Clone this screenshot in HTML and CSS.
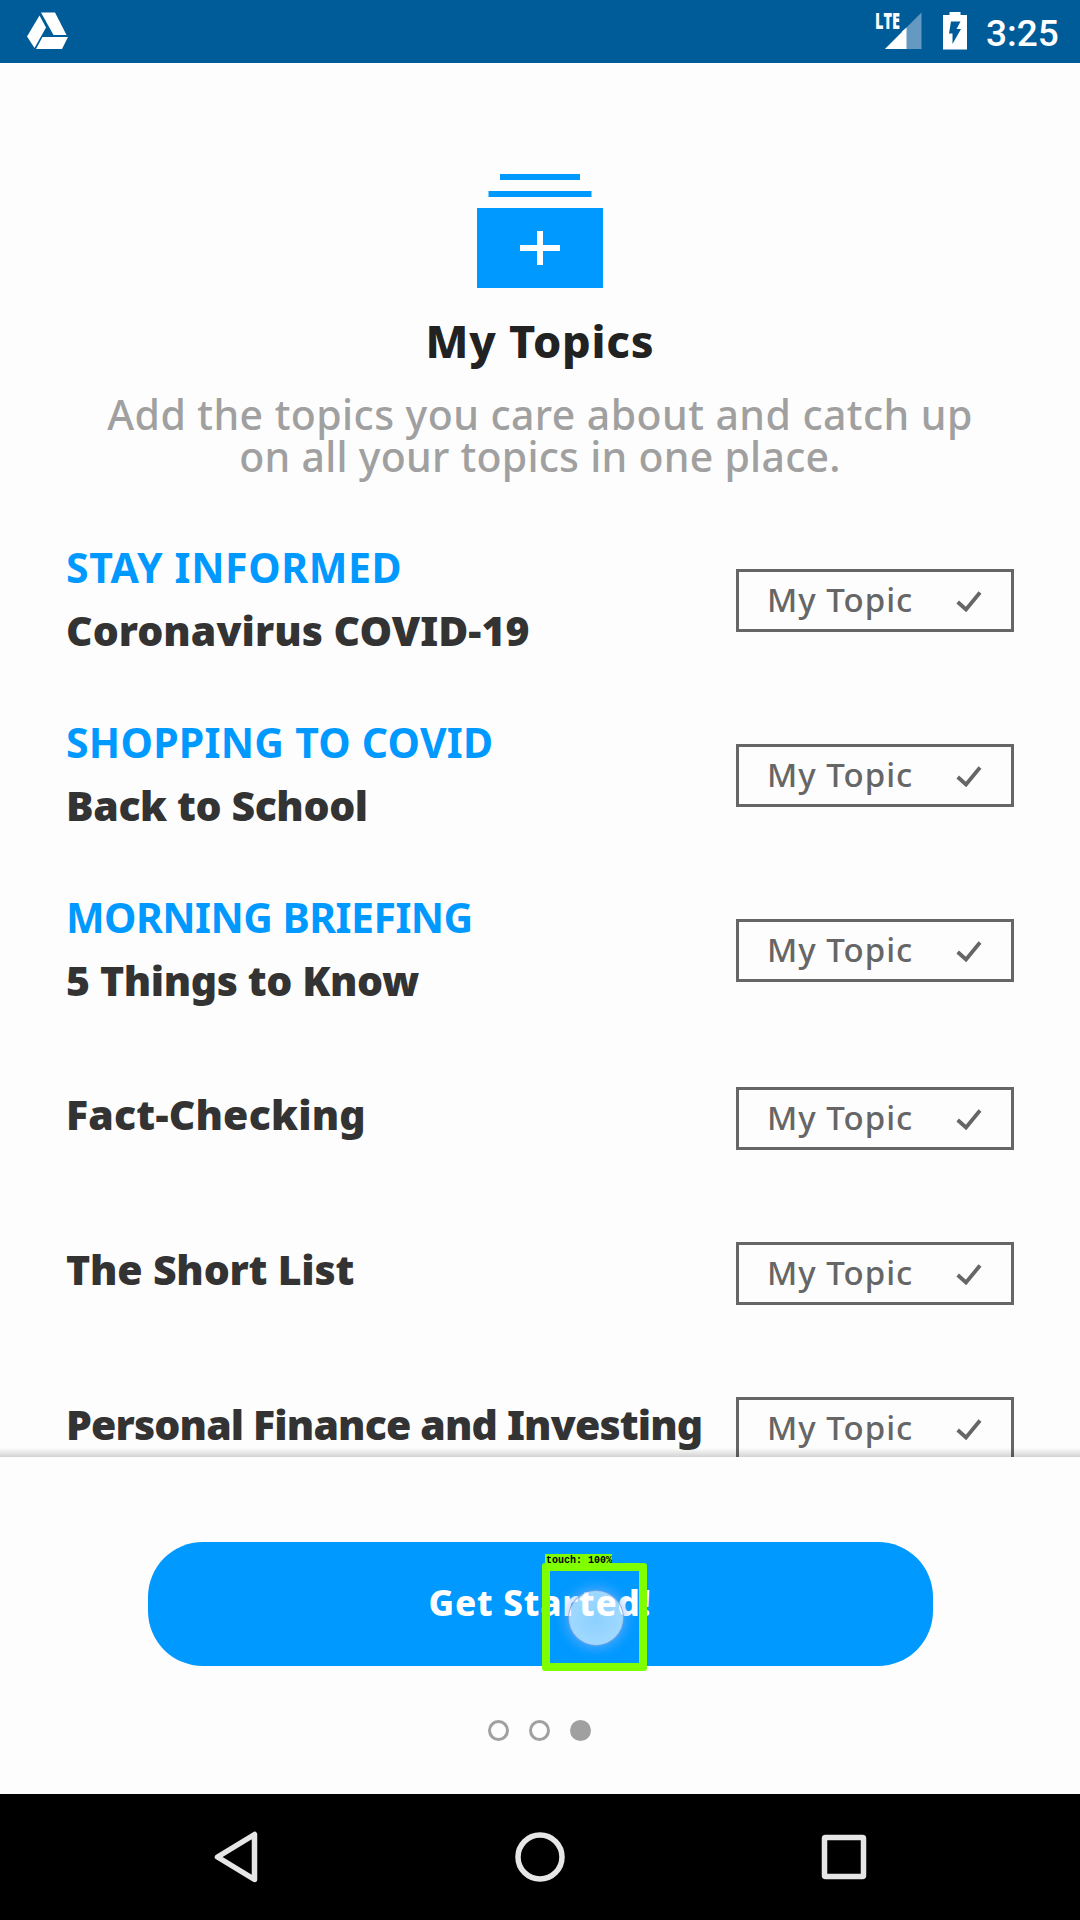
FILE: index.html
```html
<!DOCTYPE html>
<html lang="en">
<head>
<meta charset="utf-8">
<title>My Topics</title>
<link rel="stylesheet" href="styles.css">
</head>
<body>
<svg width="0" height="0" class="defs" aria-hidden="true">
  <symbol id="check" viewBox="0 0 26 22"><path d="M1.7 12 10 19.500 24 2.500" fill="none" stroke="#666" stroke-width="3.8"/></symbol>
</svg>
<div class="screen">
  <header class="status">
    <svg class="drive" width="42" height="38" viewBox="0 0 42 38" fill="#fff"><path d="M14 .5H28L39.500 23H26.500Z"/><path d="M12.500 3.500 19 15.500 7.500 36 0 24.500Z"/><path d="M15.500 25H41L35 37H9Z"/></svg>
    <div class="indicators">
      <svg class="signal" width="46" height="38" viewBox="0 0 46 38"><path d="M45.500 .5V37H9Z" fill="#6699c2"/><path d="M26.500 19.500V37H9Z" fill="#fff"/><path d="M26 19.500 30.500 15.500V37H26Z" fill="#fff"/><path d="M0 0H26V14L18 20H0Z" fill="#005c99"/><text x="-1" y="17" textLength="25" lengthAdjust="spacingAndGlyphs" class="lte">LTE</text></svg>
      <svg class="battery" width="24" height="38" viewBox="0 0 24 38"><path d="M6.500 0H17.500V3H24V37.500H0V3H6.500Z" fill="#fff"/><path d="M8 9.500H17.500L13.500 17H18L9.500 32V21.500H6Z" fill="#005c99"/></svg>
      <span class="clock">3:25</span>
    </div>
  </header>

  <main class="content">
    <svg class="stack" width="126" height="114" viewBox="0 0 126 114"><path d="M23 0H103V6H23ZM11.500 17H114.500V23H11.500ZM0 34H126V114H0Z" fill="#09f"/><path d="M43 71H60V57H66V71H83V77H66V91H60V77H43Z" fill="#fff"/></svg>
    <h1 class="title">My Topics</h1>
    <p class="subtitle"><span class="sub-first">Add the topics you care about and catch up</span><br><span class="sub-second">on all your topics in one place.</span></p>
    <ul class="topics">
      <li class="topic"><div class="label"><span class="kicker k-stay">STAY INFORMED</span><span class="name n-corona">Coronavirus COVID-19</span></div><button class="toggle">My Topic<svg width="26" height="22"><use href="#check"/></svg></button></li>
      <li class="topic"><div class="label"><span class="kicker k-shop">SHOPPING TO COVID</span><span class="name n-school">Back to School</span></div><button class="toggle">My Topic<svg width="26" height="22"><use href="#check"/></svg></button></li>
      <li class="topic last-featured"><div class="label"><span class="kicker k-morning">MORNING BRIEFING</span><span class="name n-things">5 Things to Know</span></div><button class="toggle">My Topic<svg width="26" height="22"><use href="#check"/></svg></button></li>
      <li class="topic plain"><div class="label"><span class="name n-fact">Fact-Checking</span></div><button class="toggle">My Topic<svg width="26" height="22"><use href="#check"/></svg></button></li>
      <li class="topic plain"><div class="label"><span class="name n-short">The Short List</span></div><button class="toggle">My Topic<svg width="26" height="22"><use href="#check"/></svg></button></li>
      <li class="topic plain"><div class="label"><span class="name n-finance">Personal Finance and Investing</span></div><button class="toggle">My Topic<svg width="26" height="22"><use href="#check"/></svg></button></li>
    </ul>
    <div class="edge-shadow"></div>
  </main>

  <footer class="footer">
    <button class="cta">Get Started!</button>
    <div class="dots"><i class="dot"></i><i class="dot"></i><i class="dot active"></i></div>
    <div class="pointer"></div>
    <div class="touch-box"></div>
    <div class="touch-label">touch: 100%</div>
  </footer>

  <nav class="navbar">
    <svg width="44" height="52" viewBox="0 0 44 52"><path d="M40.500 3.500V48.500L3.500 26Z"/></svg>
    <svg width="52" height="52" viewBox="0 0 52 52"><circle cx="26" cy="26" r="22"/></svg>
    <svg width="46" height="46" viewBox="0 0 46 46"><rect x="3.500" y="3.500" width="39" height="39" rx="1"/></svg>
  </nav>
</div>
</body>
</html>
```
FILE: styles.css
```css
* { box-sizing: border-box; }
body { margin: 0; background: #fdfdfd; font-family: "Noto Sans", sans-serif; }
.defs { position: absolute; }
.screen { width: 1080px; height: 1920px; display: flex; flex-direction: column; overflow: hidden; }

.status { height: 63px; flex: none; background: #005c99; display: flex; justify-content: space-between; align-items: flex-start; padding: 12px 21px 0 27px; }
.indicators { display: flex; align-items: flex-start; }
.signal { overflow: visible; }
.battery { margin-left: 21px; }
.clock { margin-left: 19px; width: 73px; font: 500 37px/43px Roboto, sans-serif; color: #fff; white-space: nowrap; }
.lte { font: 800 22px "Open Sans", sans-serif; fill: #fff; }

.content { position: relative; height: 1394px; flex: none; overflow: hidden; padding-top: 111px; display: flex; flex-direction: column; align-items: center; }
.stack { flex: none; }
.title { margin: 25px 0 0; font-size: 45px; line-height: 56px; font-weight: 800; letter-spacing: .8px; color: #222; }
.subtitle { margin: 24px 0 0; font-size: 41px; line-height: 42px; font-weight: 500; color: #a0a0a0; text-align: center; white-space: nowrap; }
.sub-first { letter-spacing: .43px; }
.sub-second { letter-spacing: .26px; }

.topics { list-style: none; width: 100%; margin: 36px 0 0; padding: 0 66px 0 66px; }
.topic { height: 175px; display: flex; align-items: center; justify-content: space-between; }
.last-featured { margin-bottom: 3px; }
.plain { height: 155px; }
.label { display: flex; flex-direction: column; padding-bottom: 3px; font-size: 41px; line-height: 63px; white-space: nowrap; }
.plain .label { padding-bottom: 8px; }
.kicker { color: #09f; font-weight: 700; }
.name { color: #333; font-weight: 900; }
.k-stay { letter-spacing: .6px; }
.k-shop { letter-spacing: .25px; }
.k-morning { letter-spacing: -.55px; }
.n-corona { letter-spacing: .03px; }
.n-school { letter-spacing: -.4px; }
.n-things { letter-spacing: -.4px; }
.n-fact { letter-spacing: .2px; }
.n-short { letter-spacing: -.2px; }
.n-finance { letter-spacing: -.85px; }
.toggle { width: 278px; height: 63px; flex: none; border: 3px solid #666; background: none; padding: 0 29px 2px 28px; display: flex; align-items: center; justify-content: space-between; font: 500 33px "Noto Sans", sans-serif; letter-spacing: 1px; color: #666; }
.toggle svg { margin-top: 2px; }
.edge-shadow { position: absolute; left: 0; right: 0; bottom: 0; height: 9px; background: linear-gradient(rgba(0,0,0,0), rgba(0,0,0,.17)); }

.footer { position: relative; height: 337px; flex: none; padding-top: 85px; display: flex; flex-direction: column; align-items: center; }
.cta { width: 785px; height: 124px; border: 0; border-radius: 55px; background: #09f; color: #fff; padding: 0 0 3px; font: 800 35px "Noto Sans", sans-serif; letter-spacing: .8px; }
.dots { display: flex; gap: 20px; margin-top: 54px; padding-right: 2px; }
.dot { width: 21px; height: 21px; border: 3px solid #a0a0a0; border-radius: 50%; }
.dot.active { background: #a0a0a0; }
.pointer { position: absolute; left: 568px; top: 133px; width: 56px; height: 56px; border-radius: 50%; background: radial-gradient(circle, rgba(255,255,255,.55), rgba(255,255,255,.66)); border: 1.500px solid rgba(105,145,215,.75); box-shadow: 0 0 11px 3px rgba(130,180,255,.55); }
.touch-box { position: absolute; left: 542px; top: 106px; width: 105px; height: 108px; border: 8px solid #80ff00; border-radius: 3px; }
.touch-label { position: absolute; left: 545px; top: 97px; width: 67px; height: 12px; background: #80ff00; color: #000; font: 700 10px/14px "Liberation Mono", monospace; padding-left: 1px; white-space: nowrap; }

.navbar { height: 126px; flex: none; background: #000; display: flex; align-items: center; justify-content: space-between; padding: 0 213px 0 214px; }
.navbar svg { fill: none; stroke: #e6e6e6; stroke-width: 5.500px; stroke-linejoin: round; }
```
